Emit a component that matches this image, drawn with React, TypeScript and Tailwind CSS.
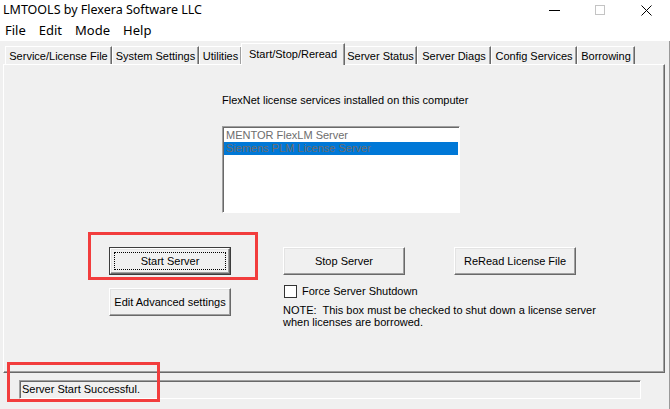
const tabs = [
  { label: 'Service/License File', cls: 'w-[107px]' },
  { label: 'System Settings', cls: 'w-[87px]' },
  { label: 'Utilities', cls: 'w-[43px]' },
  { label: 'Start/Stop/Reread', cls: 'w-[104px]', active: true },
  { label: 'Server Status', cls: 'w-[73px]' },
  { label: 'Server Diags', cls: 'w-[74px]' },
  { label: 'Config Services', cls: 'w-[86px]' },
  { label: 'Borrowing', cls: 'w-[58px]' },
]

const raised =
  'border border-t-white border-l-white border-r-[#696969] border-b-[#696969] shadow-[inset_-1px_-1px_0_#a0a0a0,inset_1px_1px_0_#e3e3e3]'

function Button({ label, focused }: { label: string; focused?: boolean }) {
  if (focused) {
    return (
      <div className="relative w-[122px] h-[28px] border border-[#3c3c3c] bg-[#f0f0f0]">
        <div className={`w-full h-full flex items-center justify-center ${raised}`}>
          {label}
        </div>
        <span className="absolute inset-[4px] border border-dotted border-black" />
      </div>
    )
  }
  return (
    <div className={`w-[122px] h-[28px] flex items-center justify-center bg-[#f0f0f0] ${raised}`}>
      {label}
    </div>
  )
}

function TitleBar() {
  return (
    <div className="h-[20px] bg-white flex items-center justify-between">
      <span className="pl-[3px] font-['Noto_Sans',sans-serif] text-[12.5px] leading-none">
        LMTOOLS by Flexera Software LLC
      </span>
      <div className="flex pr-[1px] h-full">
        <div className="w-[46px] flex items-center justify-center">
          <span className="w-[11px] h-px bg-black" />
        </div>
        <div className="w-[46px] flex items-center justify-center">
          <span className="w-[10px] h-[10px] border border-[#c4c4c4]" />
        </div>
        <div className="w-[46px] flex items-center justify-center">
          <svg width="11" height="11" viewBox="0 0 11 11">
            <path d="M0.5 0.5 L10.5 10.5 M10.5 0.5 L0.5 10.5" stroke="#000" strokeWidth="1" />
          </svg>
        </div>
      </div>
    </div>
  )
}

function MenuBar() {
  return (
    <div className="h-[21px] bg-white flex items-center pl-[5px] gap-[13px] font-['Noto_Sans',sans-serif] text-[13px] leading-none">
      <span>File</span>
      <span>Edit</span>
      <span>Mode</span>
      <span>Help</span>
    </div>
  )
}

export default function App() {
  return (
    <div className="relative w-[670px] h-[409px] overflow-hidden bg-[#f0f0f0] font-['Liberation_Sans',Arial,sans-serif] text-[11px] text-black">
      <TitleBar />
      <MenuBar />
      <div className="h-[368px] border-r border-r-[#9a9a9a]">
        {/* tab strip */}
        <div className="h-[23px] flex items-end pl-[5px]">
          {tabs.map((t) =>
            t.active ? (
              <div
                key={t.label}
                className={`${t.cls} relative z-10 -mb-px h-[22px] -mx-[1px] flex items-center justify-center bg-[#f0f0f0] border-t border-l border-r border-t-white border-l-white border-r-[#696969] shadow-[inset_-1px_0_0_#a0a0a0]`}
              >
                {t.label}
              </div>
            ) : (
              <div
                key={t.label}
                className={`${t.cls} h-[18px] pt-px flex items-center justify-center border-t border-l border-r border-t-white border-l-white border-r-[#696969] shadow-[inset_-1px_0_0_#a0a0a0]`}
              >
                {t.label}
              </div>
            )
          )}
        </div>

        {/* tab page */}
        <div className="ml-[3px] w-[662px] h-[309px] border border-t-white border-l-white border-r-[#696969] border-b-[#696969] shadow-[inset_-1px_-1px_0_#a0a0a0]">
          <div className="pt-[28px] pl-[218px] leading-[14px]">
            FlexNet license services installed on this computer
          </div>
          <div className="mt-[19px] ml-[218px] w-[238px] h-[87px] bg-white border border-t-[#a0a0a0] border-l-[#a0a0a0] border-r-white border-b-white shadow-[inset_1px_1px_0_#696969] pt-[2px] pl-[1px] text-[#6d6d6d] leading-[13px]">
            <div className="pl-[2px] h-[13px]">MENTOR FlexLM Server</div>
            <div className="pl-[2px] h-[13px] bg-[#0078d7] mr-px">Siemens PLM License Server</div>
          </div>

          <div className="mt-[34px] pl-[105px] flex gap-[52px]">
            <div className="flex flex-col gap-[13px]">
              <Button label="Start Server" focused />
              <Button label="Edit Advanced settings" />
            </div>
            <div className="w-[122px] flex flex-col">
              <Button label="Stop Server" />
              <label className="mt-[10px] pl-[1px] flex items-center gap-[5px] leading-[13px] whitespace-nowrap">
                <span className="shrink-0 w-[13px] h-[13px] bg-white border border-[#333]" />
                Force Server Shutdown
              </label>
              <div className="mt-[6px] leading-[12px] whitespace-nowrap">
                NOTE:&nbsp; This box must be checked to shut down a license server
                <br />
                when licenses are borrowed.
              </div>
            </div>
            <div className="-ml-[3px]">
              <Button label="ReRead License File" />
            </div>
          </div>
        </div>

        {/* status */}
        <div className="mt-[7px] ml-[19px] w-[622px] h-[19px] flex items-center pl-[2px] border border-t-[#a0a0a0] border-l-[#a0a0a0] border-r-white border-b-white shadow-[inset_1px_1px_0_#696969]">
          Server Start Successful.
        </div>
      </div>

      {/* red annotation frames */}
      <div className="absolute left-[88px] top-[232px] w-[170px] h-[48px] border-[3px] border-[#f23d3d]" />
      <div className="absolute left-[7px] top-[362px] w-[153px] h-[40px] border-[3px] border-[#f23d3d]" />
    </div>
  )
}
